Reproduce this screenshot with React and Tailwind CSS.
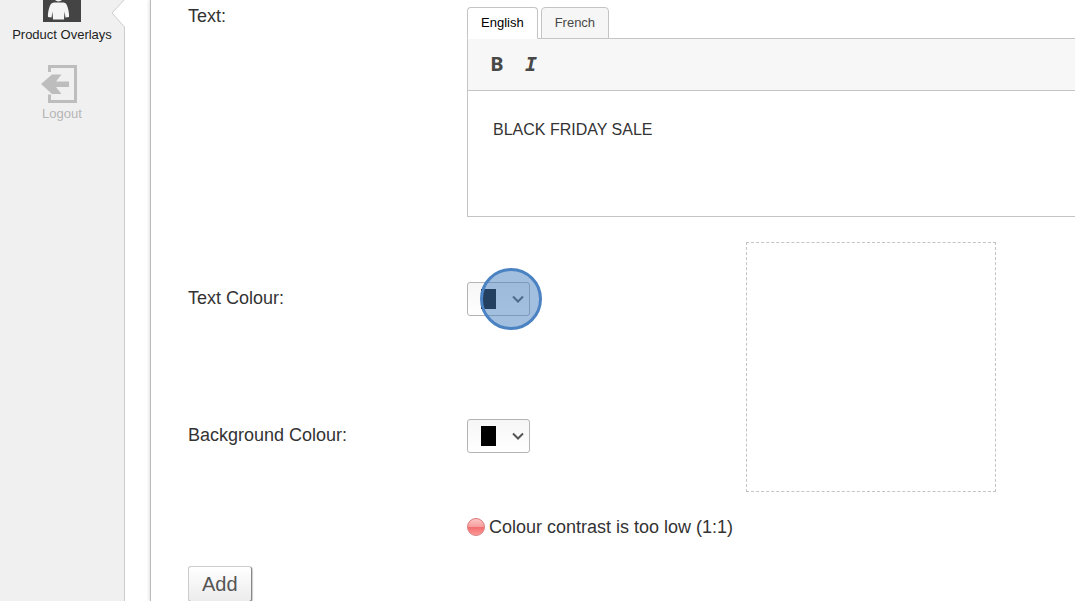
import React, { useState } from 'react';

const LANGUAGES = ['English', 'French'];

const OverlayIcon = () => (
  <svg width="38" height="38" viewBox="0 0 38 38" aria-hidden="true">
    <rect width="38" height="38" fill="#444" />
    <circle cx="15.5" cy="12.5" r="5" fill="#f4f4f4" />
    <path
      d="M11 18.500h9.500c2.500 0 3.500 2 4.500 6 .8 3 1.300 6 1 8.500l-3.500.5-1-6-.5 8h-11l-.5-8-1 6-3.500-.5c-.3-2.500.2-5.500 1-8.500 1-4 2.500-6 5-6z"
      fill="#f4f4f4"
    />
  </svg>
);

const LogoutIcon = () => (
  <svg width="42" height="38" viewBox="0 0 42 38" aria-hidden="true">
    <path d="M8.500 7V1.500h26v35h-26v-7" fill="none" stroke="#bdbdbd" strokeWidth="3" />
    <path d="M0 19 11 9.500h9.500L15 16.500h13v5.500H15l5.500 7H11z" fill="#bdbdbd" />
  </svg>
);

const ErrorDot = () => (
  <svg width="18" height="18" viewBox="0 0 18 18" aria-hidden="true">
    <defs>
      <linearGradient id="dot-base" x1="0" y1="0" x2="0" y2="1">
        <stop offset="0.5" stopColor="#f16b6d" />
        <stop offset="1" stopColor="#ff9c9a" />
      </linearGradient>
      <linearGradient id="dot-shine" x1="0" y1="0" x2="0" y2="1">
        <stop offset="0" stopColor="#fbc5c5" />
        <stop offset="1" stopColor="#f79c9c" />
      </linearGradient>
    </defs>
    <circle cx="9" cy="9" r="8.500" fill="url(#dot-base)" stroke="#d98082" />
    <path d="M1 9a8 8 0 0 1 16 0z" fill="url(#dot-shine)" />
  </svg>
);

const ColourPicker = ({ id, colour }) => (
  <button
    id={id}
    type="button"
    className="flex h-[34px] w-[63px] items-center justify-between rounded-[3px] border border-[#b4b4b4] bg-linear-to-b from-[#f6f6f6] to-white pr-[5px] pl-[13px]"
  >
    <span className="h-5 w-[15px]" style={{ backgroundColor: colour }} />
    <svg width="12" height="8" viewBox="0 0 12 8" fill="none" aria-hidden="true">
      <path d="M1 1.500 6 6.500l5-5" stroke="#555" strokeWidth="2" />
    </svg>
  </button>
);

const Sidebar = () => (
  <nav className="relative flex w-[125px] shrink-0 flex-col items-center border-r border-[#ccc] bg-[#f0f0f0] text-[13px] leading-4">
    {/* notch that marks the current section */}
    <svg className="absolute top-0 -right-px" width="14" height="28" viewBox="0 0 14 28" aria-hidden="true">
      <path d="M14 0H13L1 13l12 13.500h1z" fill="#fff" />
      <path d="M13 0 1 13l12 13.500" fill="none" stroke="#ccc" />
    </svg>
    <a href="#overlays" className="-mt-4 flex flex-col items-center gap-[5px] text-[#222]">
      <OverlayIcon />
      Product Overlays
    </a>
    <a href="#logout" className="mt-[22px] flex flex-col items-center gap-[3px] text-[#b5b5b5]">
      <LogoutIcon />
      Logout
    </a>
  </nav>
);

const TextEditor = () => {
  const [language, setLanguage] = useState('English');
  const [text, setText] = useState({ English: 'BLACK FRIDAY SALE', French: '' });

  return (
    <div className="min-w-0">
      <div role="tablist" className="relative z-10 -mb-px flex items-start gap-[3px] text-[13px]">
        {LANGUAGES.map((name) => (
          <button
            key={name}
            type="button"
            role="tab"
            aria-selected={name === language}
            onClick={() => setLanguage(name)}
            className={`h-8 rounded-t-[4px] border border-[#c4c4c4] px-[13px] ${
              name === language ? 'border-b-white bg-white text-black' : 'bg-[#f6f6f6] text-[#484848]'
            }`}
          >
            {name}
          </button>
        ))}
      </div>
      <div className="border border-r-0 border-[#c4c4c4]">
        <div className="flex h-[52px] items-center gap-2 border-b border-[#c4c4c4] bg-[#f7f7f7] px-4 pb-0.5 text-xl font-bold text-[#484848]">
          <button type="button" aria-label="Bold" className="w-[26px] font-['Noto_Sans',sans-serif]">B</button>
          <button type="button" aria-label="Italic" className="w-[26px] font-['DejaVu_Sans_Mono',monospace] italic">I</button>
        </div>
        <textarea
          id="overlay-text"
          value={text[language]}
          onChange={(e) => setText({ ...text, [language]: e.target.value })}
          className="block h-[125px] w-full resize-none px-[25px] py-[27px] text-base text-[#333] outline-none"
        />
      </div>
    </div>
  );
};

export default function App() {
  return (
    <div className="flex h-screen overflow-hidden bg-white font-['Liberation_Sans',Arial,sans-serif] text-[#333]">
      <Sidebar />
      <main className="ml-[25px] min-w-0 flex-1 border-l border-[#bbb] pl-[37px] text-lg leading-6 shadow-[-1px_0_3px_rgba(0,0,0,0.12)]">
        <div className="grid grid-cols-[279px_1fr] pt-[7px]">
          <label htmlFor="overlay-text" className="-mt-[3px]">Text:</label>
          <TextEditor />
        </div>

        <div className="mt-[25px] flex items-start">
          <div className="grid w-[558px] shrink-0 grid-cols-[279px_1fr] pt-10">
            <label htmlFor="text-colour" className="pt-1">Text Colour:</label>
            <div className="relative h-[137px]">
              <ColourPicker id="text-colour" colour="#000" />
              {/* click marker */}
              <span className="pointer-events-none absolute -top-[14px] left-[13px] size-[62px] rounded-full border-3 border-[#4a82c2] bg-[#4880c2]/50" />
            </div>
            <label htmlFor="background-colour" className="pt-1">Background Colour:</label>
            <ColourPicker id="background-colour" colour="#000" />
            <p className="col-start-2 mt-[62px] flex items-center gap-1 whitespace-nowrap">
              <ErrorDot />
              Colour contrast is too low (1:1)
            </p>
          </div>
          <div className="size-[250px] shrink-0 border border-dashed border-[#c4c4c4]" />
        </div>

        <button
          type="button"
          className="mt-[27px] h-9 rounded-[3px] border border-[#ccc] border-r-[#888] border-b-[#888] bg-linear-to-b from-white to-[#ececec] px-[13px] text-xl text-[#555] shadow-[1px_1px_1px_rgba(0,0,0,0.2)]"
        >
          Add
        </button>
      </main>
    </div>
  );
}
